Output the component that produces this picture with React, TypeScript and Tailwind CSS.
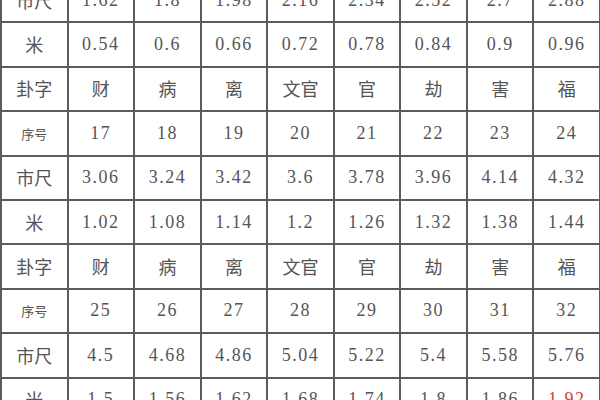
import React from "react";

type Cell = string;

const rows: Cell[][] = [
  ["市尺", "1.62", "1.8", "1.98", "2.16", "2.34", "2.52", "2.7", "2.88"],
  ["米", "0.54", "0.6", "0.66", "0.72", "0.78", "0.84", "0.9", "0.96"],
  ["卦字", "财", "病", "离", "文官", "官", "劫", "害", "福"],
  ["序号", "17", "18", "19", "20", "21", "22", "23", "24"],
  ["市尺", "3.06", "3.24", "3.42", "3.6", "3.78", "3.96", "4.14", "4.32"],
  ["米", "1.02", "1.08", "1.14", "1.2", "1.26", "1.32", "1.38", "1.44"],
  ["卦字", "财", "病", "离", "文官", "官", "劫", "害", "福"],
  ["序号", "25", "26", "27", "28", "29", "30", "31", "32"],
  ["市尺", "4.5", "4.68", "4.86", "5.04", "5.22", "5.4", "5.58", "5.76"],
  ["米", "1.5", "1.56", "1.62", "1.68", "1.74", "1.8", "1.86", "1.92"],
];

const isNum = (s: string) => /^[0-9.]+$/.test(s);

export default function App() {
  return (
    <div className="w-[600px] h-[400px] overflow-hidden bg-white">
      <div className="mt-[-23px] w-[601px] grid grid-cols-9 auto-rows-[42.4px] gap-[2px] p-[2px] bg-[#5c5c5c]">
        {rows.map((row, ri) =>
          row.map((c, ci) => {
            const red = ri === 9 && ci === 8;
            const num = isNum(c);
            const small = c === "序号";
            return (
              <div
                key={ri + "-" + ci}
                className={
                  "bg-white flex items-center justify-center whitespace-nowrap " +
                  (red ? "text-[#d23c3c] " : "text-[#555555] ") +
                  (num
                    ? "text-[18px] tracking-[1.5px] [font-family:'Liberation_Serif','Noto_Sans_CJK_SC',serif]"
                    : small
                    ? "text-[13px] [font-family:'Noto_Sans_CJK_SC',sans-serif]"
                    : "text-[18px] [font-family:'Noto_Sans_CJK_SC',sans-serif]")
                }
              >
                {c}
              </div>
            );
          })
        )}
      </div>
    </div>
  );
}
